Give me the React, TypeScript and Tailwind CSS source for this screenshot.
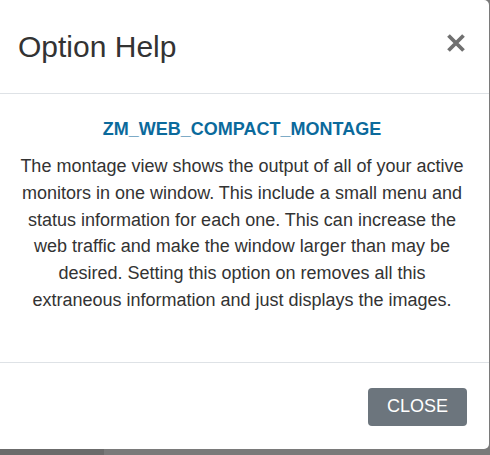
export default function App() {
  return (
    <div className="w-[490px] h-[455px] overflow-hidden bg-[#7a7a7a] flex flex-col font-['Liberation_Sans',Arial,sans-serif]">
      <div className="ml-[-5px] w-[494px] h-[449px] shrink-0 bg-white rounded-[5px] flex flex-col">
        <div className="h-[94px] shrink-0 flex items-center justify-between px-[23px] border-b border-[#dee2e6]">
          <h4 className="text-[30px] leading-[1.2] text-[#333] pt-[1px]">Option Help</h4>
          <button className="mb-[8px]">
            <svg width="20" height="20" viewBox="0 0 20 20">
              <path d="M2.5 2.5 L17.5 17.5 M17.5 2.5 L2.5 17.5" stroke="#707070" strokeWidth="3.8" />
            </svg>
          </button>
        </div>
        <div className="h-[269px] shrink-0 px-[23px] pt-[22px] text-center border-b border-[#dee2e6]">
          <div className="text-[18px] leading-[27px] font-bold text-[#0b6a9c]">ZM_WEB_COMPACT_MONTAGE</div>
          <p className="mt-[10px] text-[18px] leading-[26.8px] text-[#333]">
            The montage view shows the output of all of your active monitors in one window. This include a small
            menu and status information for each one. This can increase the web traffic and make the window
            larger than may be desired. Setting this option on removes all this extraneous information and just
            displays the images.
          </p>
        </div>
        <div className="flex-1 flex items-center justify-end pr-[22px] pt-[1px]">
          <button className="h-[38px] w-[99px] rounded-[4px] bg-[#6c757d] text-white text-[18px] uppercase">
            Close
          </button>
        </div>
      </div>
      <div className="flex-1 flex">
        <div className="w-[104px] bg-[#6b6b6b]" />
        <div className="flex-1 bg-[#7a7a7a]" />
      </div>
    </div>
  );
}
